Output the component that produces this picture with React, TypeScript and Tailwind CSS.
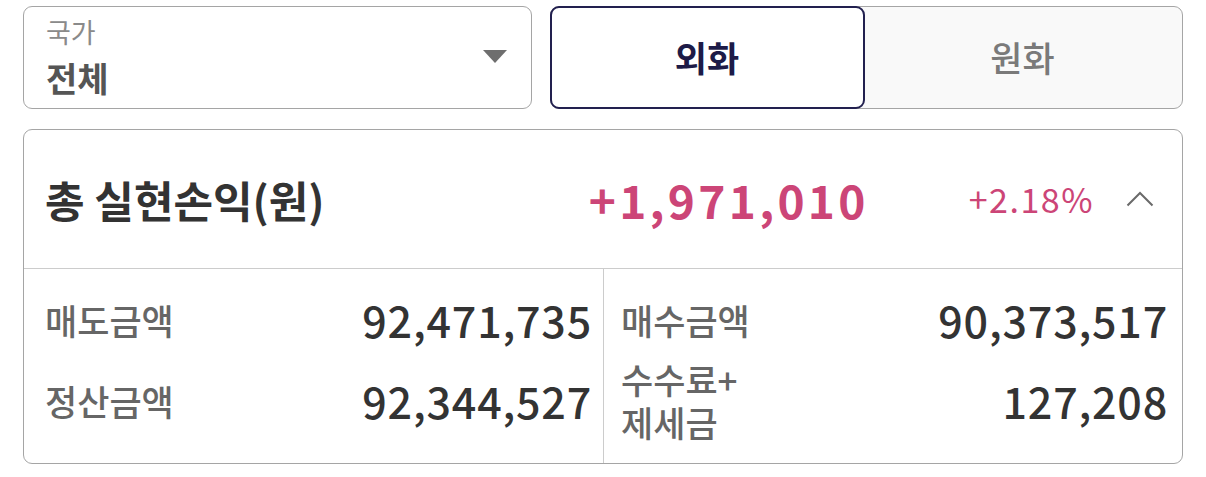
import React from "react";

const font = { fontFamily: '"Noto Sans CJK KR", "Noto Sans", sans-serif' };

function Row({ label, value }: { label: React.ReactNode; value: string }) {
  return (
    <div className="flex items-center justify-between h-[81px]">
      <div className="text-[35px] leading-[43px] text-[#666] font-medium">{label}</div>
      <div className="text-[43px] leading-none text-[#333] font-medium tracking-[0.8px]">{value}</div>
    </div>
  );
}

export default function App() {
  return (
    <div className="w-[1206px] h-[477px] bg-white pl-[23px] pt-[6px]" style={font}>
      {/* filters */}
      <div className="flex gap-[18px]">
        <div className="w-[509px] h-[103px] border-[1.5px] border-[#a5a5a5] rounded-[9px] pl-[22px] pr-[24px] flex items-center justify-between">
          <div className="flex flex-col">
            <span className="text-[27px] leading-[30px] text-[#8a8a8a]">국가</span>
            <span className="text-[34px] leading-[40px] text-[#555] font-semibold mt-[11px]">전체</span>
          </div>
          <svg width="24" height="14" viewBox="0 0 24 14" className="mb-[2px]">
            <path d="M0 0 L24 0 L12 13 Z" fill="#6e6e6e" />
          </svg>
        </div>
        <div className="w-[633px] h-[103px] flex rounded-[9px] border-[1.5px] border-[#a5a5a5] bg-[#f9f9f9]">
          <button className="w-[315px] -m-[1.5px] h-[103px] rounded-[9px] border-[2.5px] border-[#22204f] bg-white text-[35px] font-bold text-[#1d1b47]">
            외화
          </button>
          <button className="flex-1 text-[35px] font-medium text-[#7a7a7a]">원화</button>
        </div>
      </div>

      {/* summary card */}
      <div className="mt-[20px] w-[1160px] h-[335px] border-[1.5px] border-[#a5a5a5] rounded-[9px] flex flex-col">
        <div className="h-[139px] border-b border-[#cccccc] flex items-center pl-[21px] pr-[28px]">
          <div className="text-[43px] font-bold text-[#333] leading-none">총 실현손익(원)</div>
          <div className="ml-auto text-[46px] font-semibold text-[#cc4577] tracking-[3.3px] leading-none">+1,971,010</div>
          <div className="ml-[100px] text-[34px] text-[#cc4577] tracking-[1.5px] leading-none">+2.18%</div>
          <svg width="28" height="16" viewBox="0 0 28 16" className="ml-[32px]">
            <path d="M1.5 14.5 L14 2 L26.5 14.5" fill="none" stroke="#6a6a6a" strokeWidth="2" />
          </svg>
        </div>
        <div className="flex-1 grid grid-cols-[580px_1fr] pt-[10px]">
          <div className="border-r border-[#cccccc] pl-[21px] pr-[11px] -mt-[10px] pt-[10px]">
            <Row label="매도금액" value="92,471,735" />
            <Row label="정산금액" value="92,344,527" />
          </div>
          <div className="pl-[17px] pr-[14px]">
            <Row label="매수금액" value="90,373,517" />
            <Row
              label={
                <span className="flex flex-col">
                  <span className="block leading-[40px]">수수료+</span>
                  <span className="block leading-[40px] mt-[3px]">제세금</span>
                </span>
              }
              value="127,208"
            />
          </div>
        </div>
      </div>
    </div>
  );
}
